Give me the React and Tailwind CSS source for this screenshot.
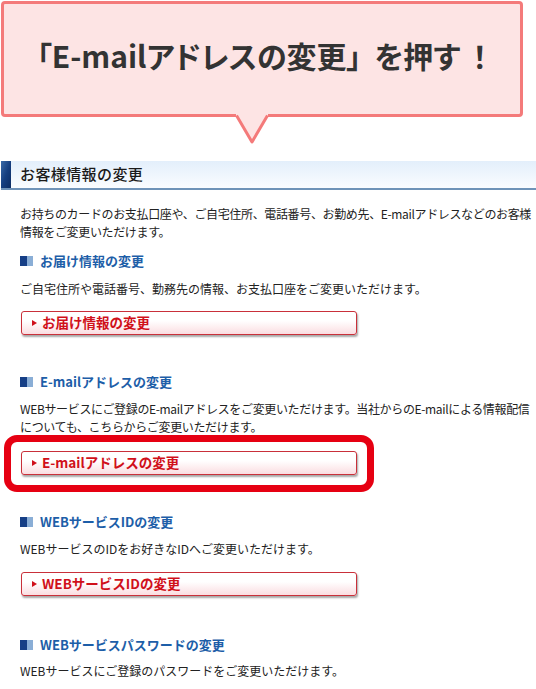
import React from "react";

function SubHeading({ children }) {
  return (
    <div className="flex items-center h-[18px] pl-[20px]">
      <span className="flex h-[10px] w-[13px]">
        <span className="w-[7px] h-full bg-[#163f86]" />
        <span className="w-[6px] h-full bg-[#8aaed6]" />
      </span>
      <span className="ml-[7px] text-[13px] font-bold text-[#1d5ea8] leading-[18px] whitespace-nowrap">
        {children}
      </span>
    </div>
  );
}

function Desc({ children, className = "" }) {
  return (
    <p className={"pl-[20px] text-[12px] leading-[18px] text-[#222] whitespace-nowrap " + className}>
      {children}
    </p>
  );
}

function LinkButton({ children }) {
  return (
    <div className="ml-[21px] w-[336px] h-[24px] rounded-[3px] border border-[#c9303a] bg-linear-to-b from-white from-40% to-[#fadde1] shadow-[1px_2px_2px_rgba(0,0,0,0.35)] flex items-center pl-[10px]">
      <span className="w-0 h-0 border-y-[3.5px] border-y-transparent border-l-[5px] border-l-[#d0101a]" />
      <span className="ml-[5px] text-[13.5px] font-bold text-[#d0101a] leading-none whitespace-nowrap">
        {children}
      </span>
    </div>
  );
}

export default function App() {
  return (
    <div className="w-[536px] h-[689px] bg-white overflow-hidden font-['Noto_Sans_CJK_JP','Noto_Sans',sans-serif]">
      {/* Callout */}
      <div className="relative ml-[1px] mt-[1px] w-[522px] h-[116px] rounded-[4px] border-[3px] border-[#f47a7a] bg-[#fde4e4] flex items-center justify-center">
        <div className="flex items-baseline text-[30px] font-bold text-[#333] [font-feature-settings:'palt'] whitespace-nowrap -mt-[8px]">
          <span>「E-mailアドレスの変更」</span>
          <span className="ml-[13px]">を押す</span>
          <span className="ml-[12px]">！</span>
        </div>
        <svg
          className="absolute left-[228px] top-[106px]"
          width="40"
          height="36"
          viewBox="0 0 40 36"
        >
          <polygon points="4,0 36,0 36,5.5 20,32 4,5.5" fill="#fde4e4" />
          <polyline
            points="4.5,5.5 20,32 35.5,5.5"
            fill="none"
            stroke="#f47a7a"
            strokeWidth="3"
            strokeLinejoin="round"
          />
        </svg>
      </div>

      {/* Section header bar */}
      <div className="ml-[1px] mt-[44px] h-[29px] flex border-b-2 border-[#6f93b8] bg-linear-to-b from-[#e3effb] to-[#fafcff]">
        <div className="w-[10px] h-full bg-linear-to-br from-[#3a6aa8] via-[#163f80] to-[#0c2c62]" />
        <div className="pl-[9px] flex items-center text-[15px] font-medium text-[#1a1a1a] tracking-[0.4px]">
          お客様情報の変更
        </div>
      </div>

      <Desc className="mt-[15px] tracking-[-0.35px]">
        お持ちのカードのお支払口座や、ご自宅住所、電話番号、お勤め先、E-mailアドレスなどのお客様
        <br />
        情報をご変更いただけます。
      </Desc>

      <div className="mt-[11px]">
        <SubHeading>お届け情報の変更</SubHeading>
      </div>
      <Desc className="mt-[10px]">ご自宅住所や電話番号、勤務先の情報、お支払口座をご変更いただけます。</Desc>
      <div className="mt-[13px]">
        <LinkButton>お届け情報の変更</LinkButton>
      </div>

      <div className="mt-[38px]">
        <SubHeading>E-mailアドレスの変更</SubHeading>
      </div>
      <Desc className="mt-[9px] tracking-[-0.35px]">
        WEBサービスにご登録のE-mailアドレスをご変更いただけます。当社からのE-mailによる情報配信
        <br />
        についても、こちらからご変更いただけます。
      </Desc>
      <div className="mt-[15px] relative">
        <LinkButton>E-mailアドレスの変更</LinkButton>
        <div className="absolute left-[4px] top-[-16px] w-[370px] h-[57px] rounded-[13px] border-[7px] border-[#e60012]" />
      </div>

      <div className="mt-[38px]">
        <SubHeading>WEBサービスIDの変更</SubHeading>
      </div>
      <Desc className="mt-[9px]">WEBサービスのIDをお好きなIDへご変更いただけます。</Desc>
      <div className="mt-[14px]">
        <LinkButton>WEBサービスIDの変更</LinkButton>
      </div>

      <div className="mt-[40px]">
        <SubHeading>WEBサービスパスワードの変更</SubHeading>
      </div>
      <Desc className="mt-[8px]">WEBサービスにご登録のパスワードをご変更いただけます。</Desc>
    </div>
  );
}
